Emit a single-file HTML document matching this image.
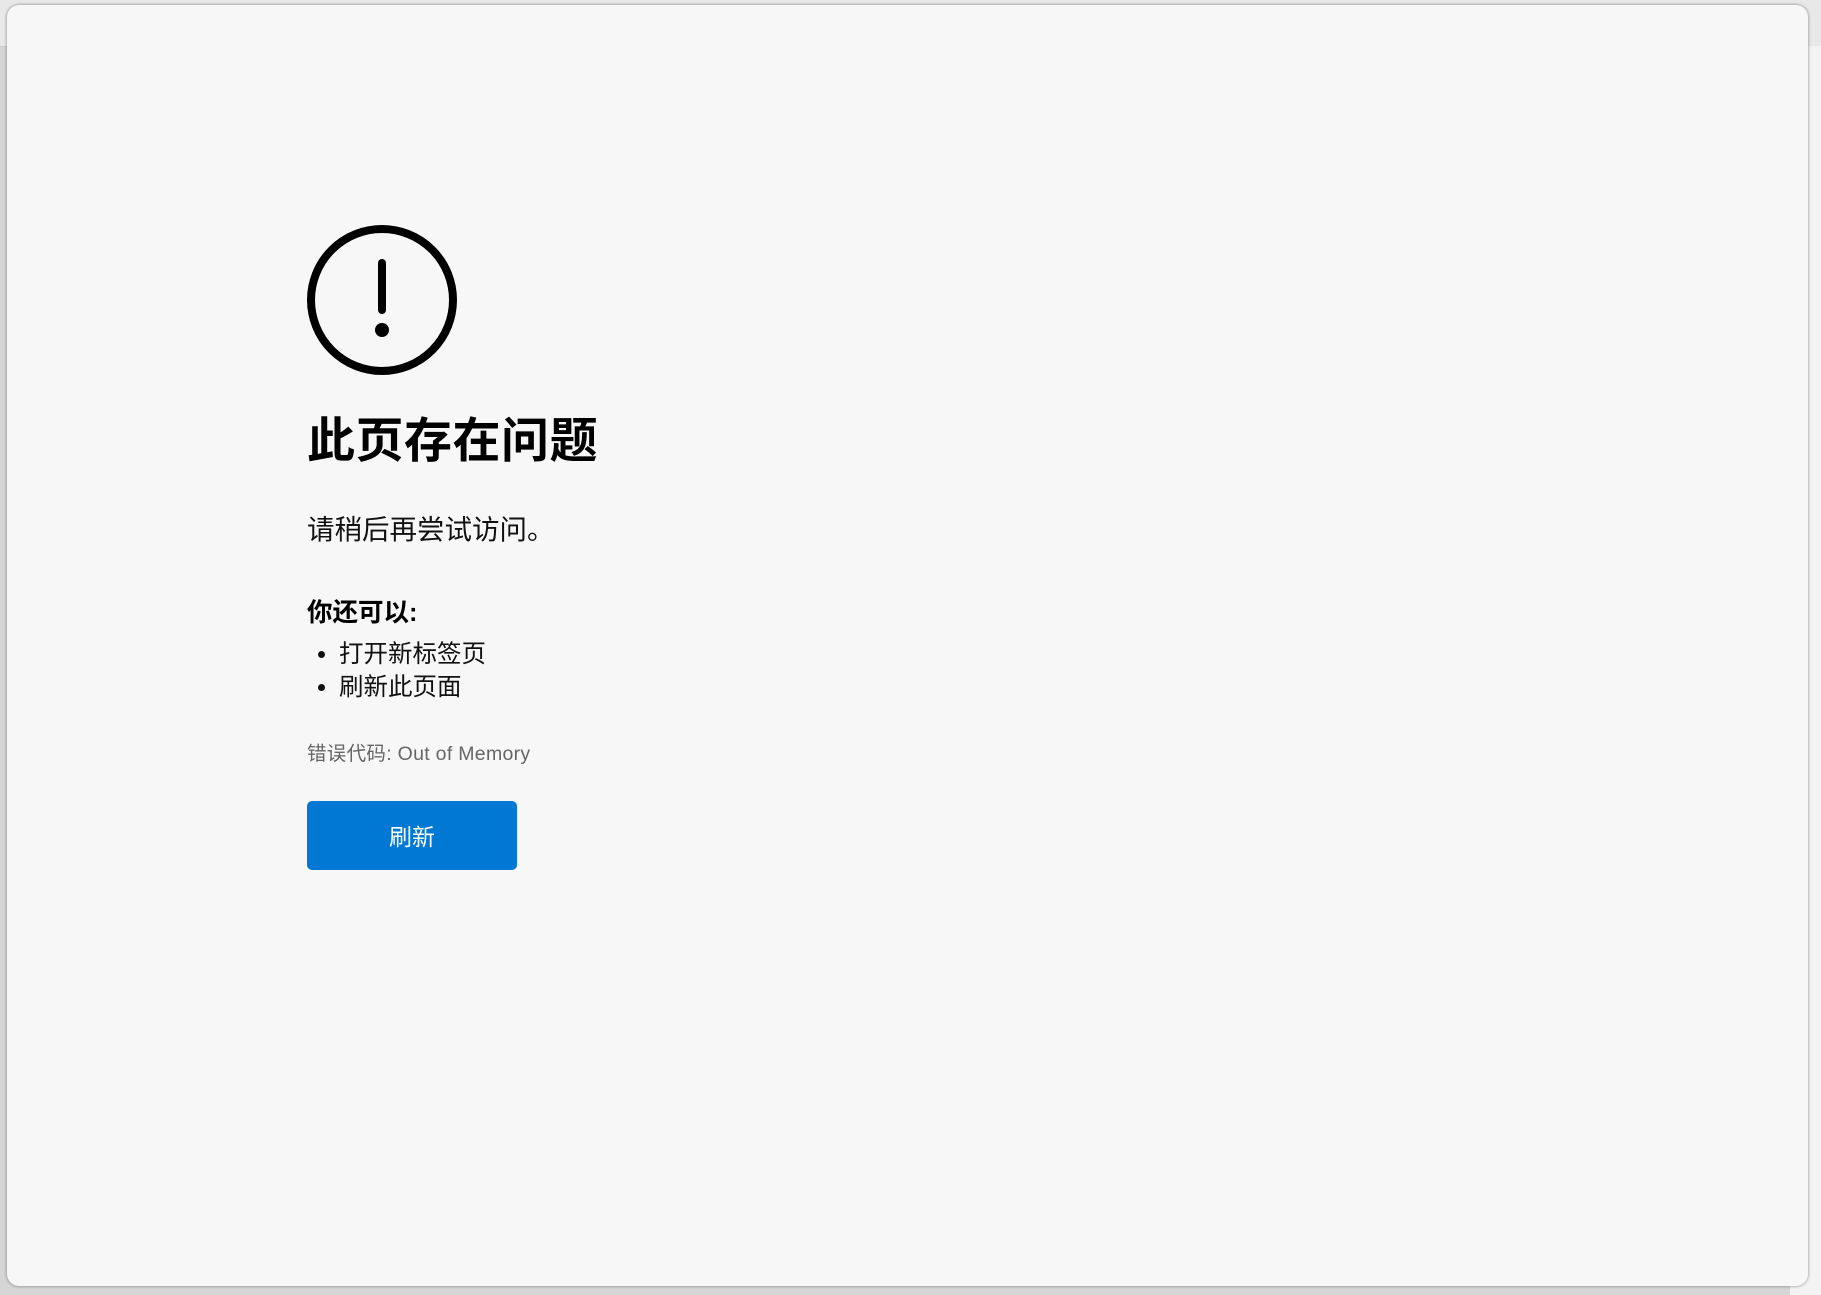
<!DOCTYPE html>
<html><head><meta charset="utf-8"><style>
html,body{margin:0;padding:0;width:1821px;height:1295px;overflow:hidden;background:#d6d6d6;font-family:"Liberation Sans","Noto Sans CJK SC",sans-serif;}
.topbar{position:absolute;left:0;top:0;width:1821px;height:46px;background:#e8e8e8;border-bottom:1px solid #ccc;}
.right{position:absolute;left:1790px;top:46px;width:31px;height:1249px;background:#f3f3f3;}
.panel{position:absolute;left:7px;top:5px;width:1801px;height:1281px;background:#f7f7f7;border-radius:12px;box-shadow:0 0 3px rgba(0,0,0,.45);}
.c{position:absolute;}
h1{position:absolute;left:307px;top:409px;margin:0;font-size:48px;font-weight:bold;color:#000;line-height:66px;letter-spacing:0.5px;}
.sub{left:307px;top:510px;font-size:27.5px;color:#111;line-height:40px;}
.h2{left:307px;top:595px;font-size:25.5px;font-weight:bold;color:#000;line-height:36px;}
ul{position:absolute;left:307px;top:638px;margin:0;padding:0 0 0 32px;font-size:24.5px;line-height:33px;color:#111;}
.err{left:307px;top:740px;font-size:19.5px;color:#666;line-height:28px;letter-spacing:0.3px;}
.btn{position:absolute;left:307px;top:801px;width:210px;height:69px;background:#0078d4;border-radius:5px;color:#fff;font-size:23px;text-align:center;line-height:72px;}
</style></head><body>
<div class="topbar"></div>
<div class="right"></div>
<div class="panel"></div>
<svg class="c" style="left:300px;top:218px" width="164" height="164" viewBox="0 0 164 164">
<circle cx="82" cy="82" r="71" fill="none" stroke="#000" stroke-width="8"/>
<line x1="82" y1="45" x2="82" y2="92" stroke="#000" stroke-width="8" stroke-linecap="round"/>
<circle cx="82" cy="112" r="7" fill="#000"/>
</svg>
<h1>此页存在问题</h1>
<div class="c sub">请稍后再尝试访问。</div>
<div class="c h2">你还可以:</div>
<ul><li>打开新标签页</li><li>刷新此页面</li></ul>
<div class="c err">错误代码: Out of Memory</div>
<div class="btn">刷新</div>
</body></html>
